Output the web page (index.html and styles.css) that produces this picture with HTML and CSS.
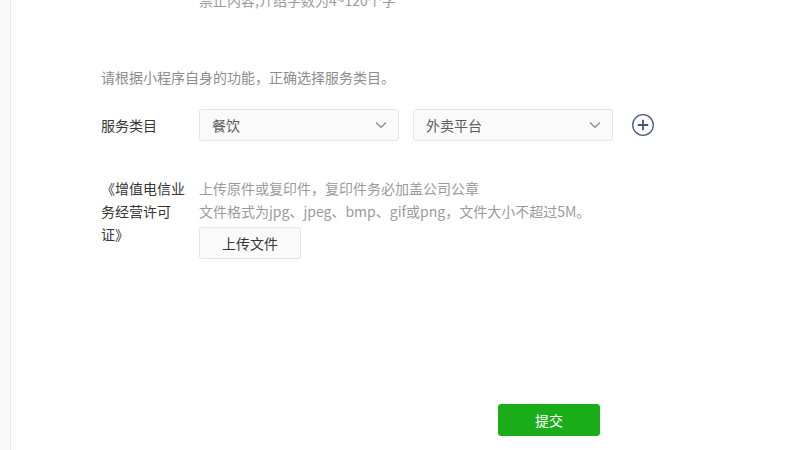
FILE: index.html
```html
<!DOCTYPE html>
<html>

<head>
  <title>服务类目</title>
  <link rel="stylesheet" href="styles.css">
</head>

<body>
  <div class="layout">
    <div class="side"></div>
    <div class="main">
      <div class="form-row">
        <div class="form-label"></div>
        <div class="form-field">
          <p class="tips cut">禁止内容,介绍字数为4~120个字</p>
        </div>
      </div>

      <p class="hint">请根据小程序自身的功能，正确选择服务类目。</p>

      <div class="form-row category-row">
        <div class="form-label">服务类目</div>
        <div class="form-field selects">
          <div class="select">
            <span>餐饮</span>
            <svg class="arrow" width="12" height="8" viewBox="0 0 12 8"><path d="M1 1.5 6 6.2 11 1.5" fill="none" stroke="#8c8c8c" stroke-width="1.4"/></svg>
          </div>
          <div class="select">
            <span>外卖平台</span>
            <svg class="arrow" width="12" height="8" viewBox="0 0 12 8"><path d="M1 1.5 6 6.2 11 1.5" fill="none" stroke="#8c8c8c" stroke-width="1.4"/></svg>
          </div>
          <svg class="add" width="24" height="24" viewBox="0 0 24 24">
            <circle cx="12" cy="12" r="10.3" fill="none" stroke="#4a5a88" stroke-width="1.3"/>
            <path d="M12 6.8v10.4M6.8 12h10.4" stroke="#44537d" stroke-width="1.8"/>
          </svg>
        </div>
      </div>

      <div class="form-row upload-row">
        <div class="form-label">《增值电信业务经营许可证》</div>
        <div class="form-field">
          <p class="tips">上传原件或复印件，复印件务必加盖公司公章</p>
          <p class="tips">文件格式为jpg、jpeg、bmp、gif或png，文件大小不超过5M。</p>
          <button class="btn">上传文件</button>
        </div>
      </div>

      <div class="submit-bar">
        <button class="btn btn-primary">提交</button>
      </div>
    </div>
  </div>
</body>

</html>
```

FILE: styles.css
```css
body {
  margin: 0;
  padding: 0;
  font-family: "Noto Sans CJK SC", "Liberation Sans", sans-serif;
  font-size: 14px;
  color: #353535;
  background-color: #fff;
  overflow: hidden;
}

p {
  margin: 0;
}

.layout {
  display: flex;
  height: 450px;
}

/* left panel edge */
.side {
  width: 10px;
  background-color: #f7f8fa;
  border-right: 1px solid #e7e7eb;
}

.main {
  flex: 1;
  padding-left: 90px;
}

.form-row {
  display: flex;
}

.form-label {
  width: 88px;
  margin-right: 10px;
  line-height: 23px;
  color: #353535;
}

.tips {
  color: #9a9a9a;
  line-height: 23px;
}

.tips.cut {
  margin-top: -11px;
}

.hint {
  margin-top: 54px;
  line-height: 22px;
  color: #8d8d8d;
}

/* service category */
.category-row {
  margin-top: 21px;
  align-items: center;
}

.selects {
  display: flex;
  align-items: center;
}

.select {
  box-sizing: border-box;
  width: 200px;
  height: 32px;
  margin-right: 14px;
  padding: 0 12px;
  display: flex;
  justify-content: space-between;
  align-items: center;
  background-color: #fafafa;
  border: 1px solid #e4e4e4;
  border-radius: 3px;
  color: #5c5c5c;
}

.arrow {
  margin-right: -1px;
}

.add {
  margin-left: 4px;
}

/* license upload */
.upload-row {
  margin-top: 36px;
}

.btn {
  box-sizing: border-box;
  width: 102px;
  height: 32px;
  margin-top: 4px;
  border: 1px solid #e4e4e4;
  border-radius: 3px;
  background-color: #fafafa;
  font-family: inherit;
  font-size: 14px;
  color: #353535;
  cursor: pointer;
}

.submit-bar {
  margin-top: 145px;
  padding-left: 397px;
}

.btn-primary {
  margin-top: 0;
  border-color: #1aad19;
  background-color: #1aad19;
  color: #fff;
}
```
